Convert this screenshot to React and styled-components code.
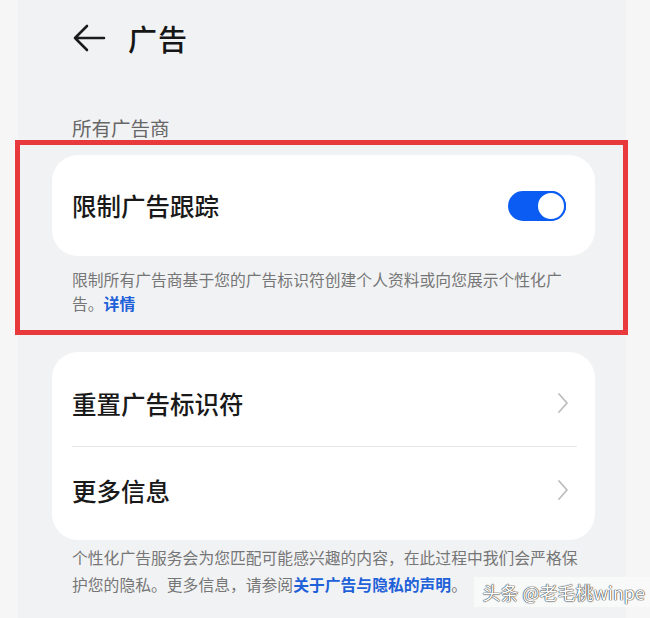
import React from "react";
import styled, { createGlobalStyle } from "styled-components";

const GlobalStyle = createGlobalStyle`
  html, body {
    margin: 0;
    padding: 0;
    background: #f6f6f7;
  }
  body {
    font-family: "Noto Sans CJK SC", "Noto Sans", "Liberation Sans", sans-serif;
    color: #1a1a1a;
  }
`;

const Page = styled.div`
  position: relative;
  width: 650px;
  height: 618px;
  overflow: hidden;
  background: #f6f6f7;
`;

const Screen = styled.div`
  margin-left: 18px;
  width: 608px;
  height: 100%;
  background: #f1f2f4;
  display: flex;
  flex-direction: column;
`;

const Header = styled.div`
  height: 76px;
  display: flex;
  align-items: center;
  gap: 22px;
  padding-left: 54px;
`;

const BackButton = styled.div`
  width: 34px;
  height: 30px;
  display: flex;
  align-items: center;
  justify-content: center;
`;

const Title = styled.h1`
  margin: 0;
  font-size: 29px;
  font-weight: 500;
  letter-spacing: 1px;
  color: #161616;
`;

const SectionLabel = styled.div`
  margin-top: 40px;
  padding-left: 54px;
  font-size: 19.5px;
  line-height: 24px;
  color: #676767;
`;

const Highlight = styled.div`
  margin-left: -3px;
  width: 613px;
  box-sizing: border-box;
  border: 5px solid #e8393c;
  padding: 10px 28px 14px 32px;
`;

const Card = styled.div`
  background: #ffffff;
  border-radius: 26px;
  padding: ${(p) => p.$pad || "0"};
`;

const Row = styled.div`
  height: ${(p) => p.$h || 86}px;
  display: flex;
  align-items: center;
  justify-content: space-between;
  padding: 0 ${(p) => p.$right || 24}px 0 20px;
`;

const RowLabel = styled.span`
  font-size: 24.5px;
  font-weight: 500;
  color: #191919;
`;

const Divider = styled.div`
  height: 1px;
  margin: 0 18px 0 20px;
  background: #e8e8e8;
`;

const Note = styled.p`
  margin: ${(p) => p.$margin || "0"};
  padding: 0 0 0 20px;
  width: 512px;
  font-size: 15.8px;
  line-height: ${(p) => p.$lh || 24}px;
  color: #767676;
`;

const Link = styled.span`
  color: #2060d8;
  font-weight: 600;
`;

const Toggle = styled.div`
  position: relative;
  width: 58px;
  height: 30px;
  border-radius: 15px;
  background: #0b5cf2;
`;

const Knob = styled.div`
  position: absolute;
  top: 0;
  right: 0;
  width: 26px;
  height: 26px;
  border-radius: 50%;
  background: #ffffff;
  border: 2px solid #0b5cf2;
`;

const Second = styled.div`
  margin-top: 17px;
  padding-left: 34px;
  width: 543px;
`;

const Watermark = styled.div`
  position: absolute;
  right: 0;
  bottom: 11px;
  padding: 3px 5px 3px 8px;
  background: rgba(250, 250, 250, 0.8);
  font-size: 18px;
  font-weight: 400;
  line-height: 24px;
  color: #ffffff;
  font-family: "Noto Sans CJK SC", "Liberation Sans", sans-serif;
  text-shadow: 0 0 1px #3a3a3a, 0 0 1px #3a3a3a, 0 0 1px #3a3a3a;
`;

const ArrowLeft = () => (
  <svg width="34" height="30" viewBox="0 0 34 30" fill="none">
    <path
      d="M32 15H3M15 3L3 15l12 12"
      stroke="#1b1b1b"
      strokeWidth="2.6"
      strokeLinecap="round"
      strokeLinejoin="round"
    />
  </svg>
);

const Chevron = () => (
  <svg width="12" height="22" viewBox="0 0 12 22" fill="none">
    <path
      d="M2 2l8 9-8 9"
      stroke="#bdbdbd"
      strokeWidth="1.8"
      strokeLinecap="round"
      strokeLinejoin="round"
    />
  </svg>
);

export default function App() {
  return (
    <>
      <GlobalStyle />
      <Page>
        <Screen>
          <Header>
            <BackButton>
              <ArrowLeft />
            </BackButton>
            <Title>广告</Title>
          </Header>
          <SectionLabel>所有广告商</SectionLabel>
          <Highlight>
            <Card>
              <Row $h={101} $right={29}>
                <RowLabel>限制广告跟踪</RowLabel>
                <Toggle>
                  <Knob />
                </Toggle>
              </Row>
            </Card>
            <Note $margin="12px 0 0" $lh={24}>
              限制所有广告商基于您的广告标识符创建个人资料或向您展示个性化广告。<Link>详情</Link>
            </Note>
          </Highlight>
          <Second>
            <Card $pad="8px 0 7px">
              <Row $right={26}>
                <RowLabel>重置广告标识符</RowLabel>
                <Chevron />
              </Row>
              <Divider />
              <Row $right={26}>
                <RowLabel>更多信息</RowLabel>
                <Chevron />
              </Row>
            </Card>
            <Note $margin="4px 0 0" $lh={27}>
              个性化广告服务会为您匹配可能感兴趣的内容，在此过程中我们会严格保护您的隐私。更多信息，请参阅<Link>关于广告与隐私的声明</Link>。
            </Note>
          </Second>
        </Screen>
        <Watermark>头条 @老毛桃winpe</Watermark>
      </Page>
    </>
  );
}
